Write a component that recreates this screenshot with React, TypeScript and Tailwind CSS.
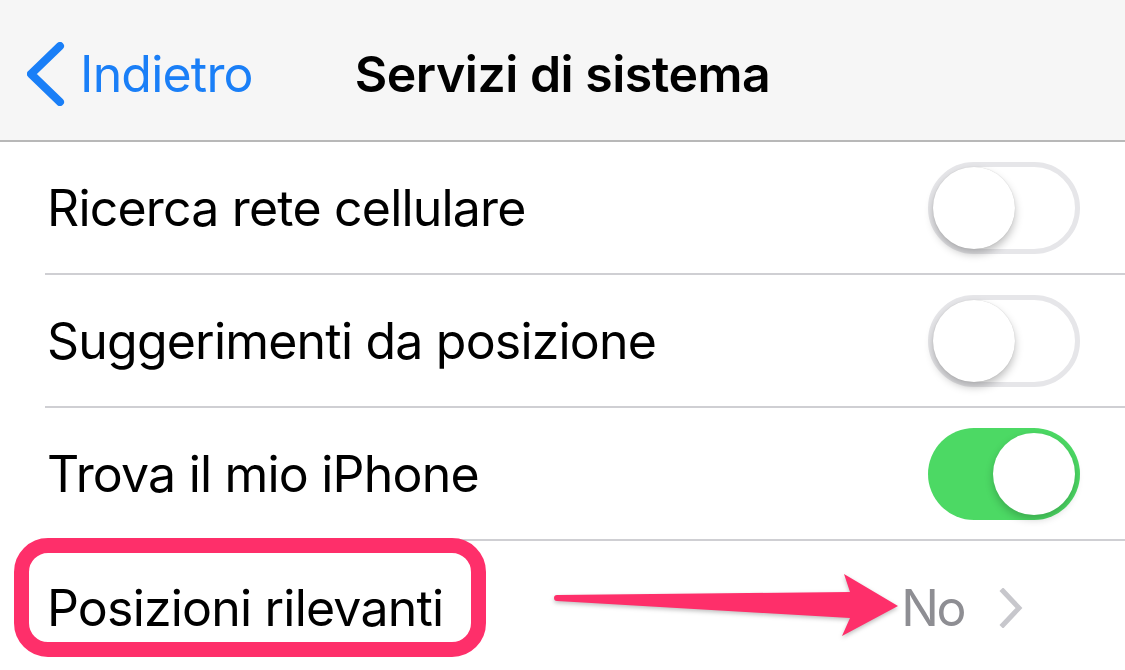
import React from "react";

type Row = {
  label: string;
  on: boolean;
};

const rows: Row[] = [
  { label: "Ricerca rete cellulare", on: false },
  { label: "Suggerimenti da posizione", on: false },
  { label: "Trova il mio iPhone", on: true },
];

const font = { fontFamily: "Inter, 'Noto Sans', sans-serif" };

function Toggle({ on }: { on: boolean }) {
  if (on) {
    return (
      <div className="relative h-[92px] w-[152px] rounded-full bg-[#4cd964]">
        <div className="absolute right-[5px] top-[5px] h-[82px] w-[82px] rounded-full bg-white shadow-[0_4px_8px_rgba(0,0,0,0.22)]" />
      </div>
    );
  }
  return (
    <div className="relative h-[92px] w-[152px] rounded-full border-[5px] border-[#e6e6e9] bg-white">
      <div className="absolute left-0 top-0 h-[82px] w-[82px] rounded-full bg-white shadow-[0_5px_9px_rgba(0,0,0,0.25),0_0_1px_rgba(0,0,0,0.2)]" />
    </div>
  );
}

export default function App() {
  return (
    <div className="h-[670px] w-[1125px] overflow-hidden bg-white text-black" style={font}>
      <header className="grid h-[142px] grid-cols-[1fr_auto_1fr] items-center border-b-2 border-[#b8b8b8] bg-[#f6f6f6]">
        <div className="flex items-center pl-[27px] pt-[8px]">
          <svg width="38" height="64" viewBox="0 0 38 64" className="mr-[15px]">
            <polyline
              points="33,4 4,32 33,60"
              fill="none"
              stroke="#1a7ff7"
              strokeWidth="8"
              strokeLinecap="round"
              strokeLinejoin="round"
            />
          </svg>
          <span className="text-[50px] leading-none tracking-[-0.8px] text-[#1a7ff7]">Indietro</span>
        </div>
        <h1 className="pt-[8px] text-[50px] font-semibold leading-none tracking-[-0.5px]">Servizi di sistema</h1>
        <div />
      </header>

      {rows.map((r) => (
        <div key={r.label} className="pl-[45px]">
          <div className="flex h-[133px] items-center justify-between border-b-2 border-[#cfcfd3] pr-[45px]">
            <span className="pl-[2px] text-[50px] leading-none tracking-[-0.8px]">{r.label}</span>
            <Toggle on={r.on} />
          </div>
        </div>
      ))}

      <div className="relative flex h-[133px] items-center justify-between pl-[47px] pr-[102px]">
        <span className="text-[50px] leading-none tracking-[-0.8px]">Posizioni rilevanti</span>
        <div className="flex items-center gap-[35px]">
          <span className="text-[50px] leading-none tracking-[-2.5px] text-[#8e8e93]">No</span>
          <svg width="24" height="40" viewBox="0 0 24 40">
            <polyline
              points="4,3 20,20 4,37"
              fill="none"
              stroke="#c7c7cc"
              strokeWidth="5"
              strokeLinecap="square"
            />
          </svg>
        </div>

        <div className="absolute left-[14px] top-[-3px] h-[119px] w-[472px] rounded-[34px] border-[15px] border-[#fe2f6a]" />

        <svg
          className="absolute left-[540px] top-[20px] drop-shadow-[0_2px_2px_rgba(0,0,0,0.25)]"
          width="380"
          height="90"
          viewBox="540 561 380 90"
        >
          <path
            d="M557,595 L850,592 L844,574 L898,606 L842,636 L850,618 L557,601 A3,3 0 0 1 557,595 Z"
            fill="#fe2f6a"
          />
        </svg>
      </div>
    </div>
  );
}
